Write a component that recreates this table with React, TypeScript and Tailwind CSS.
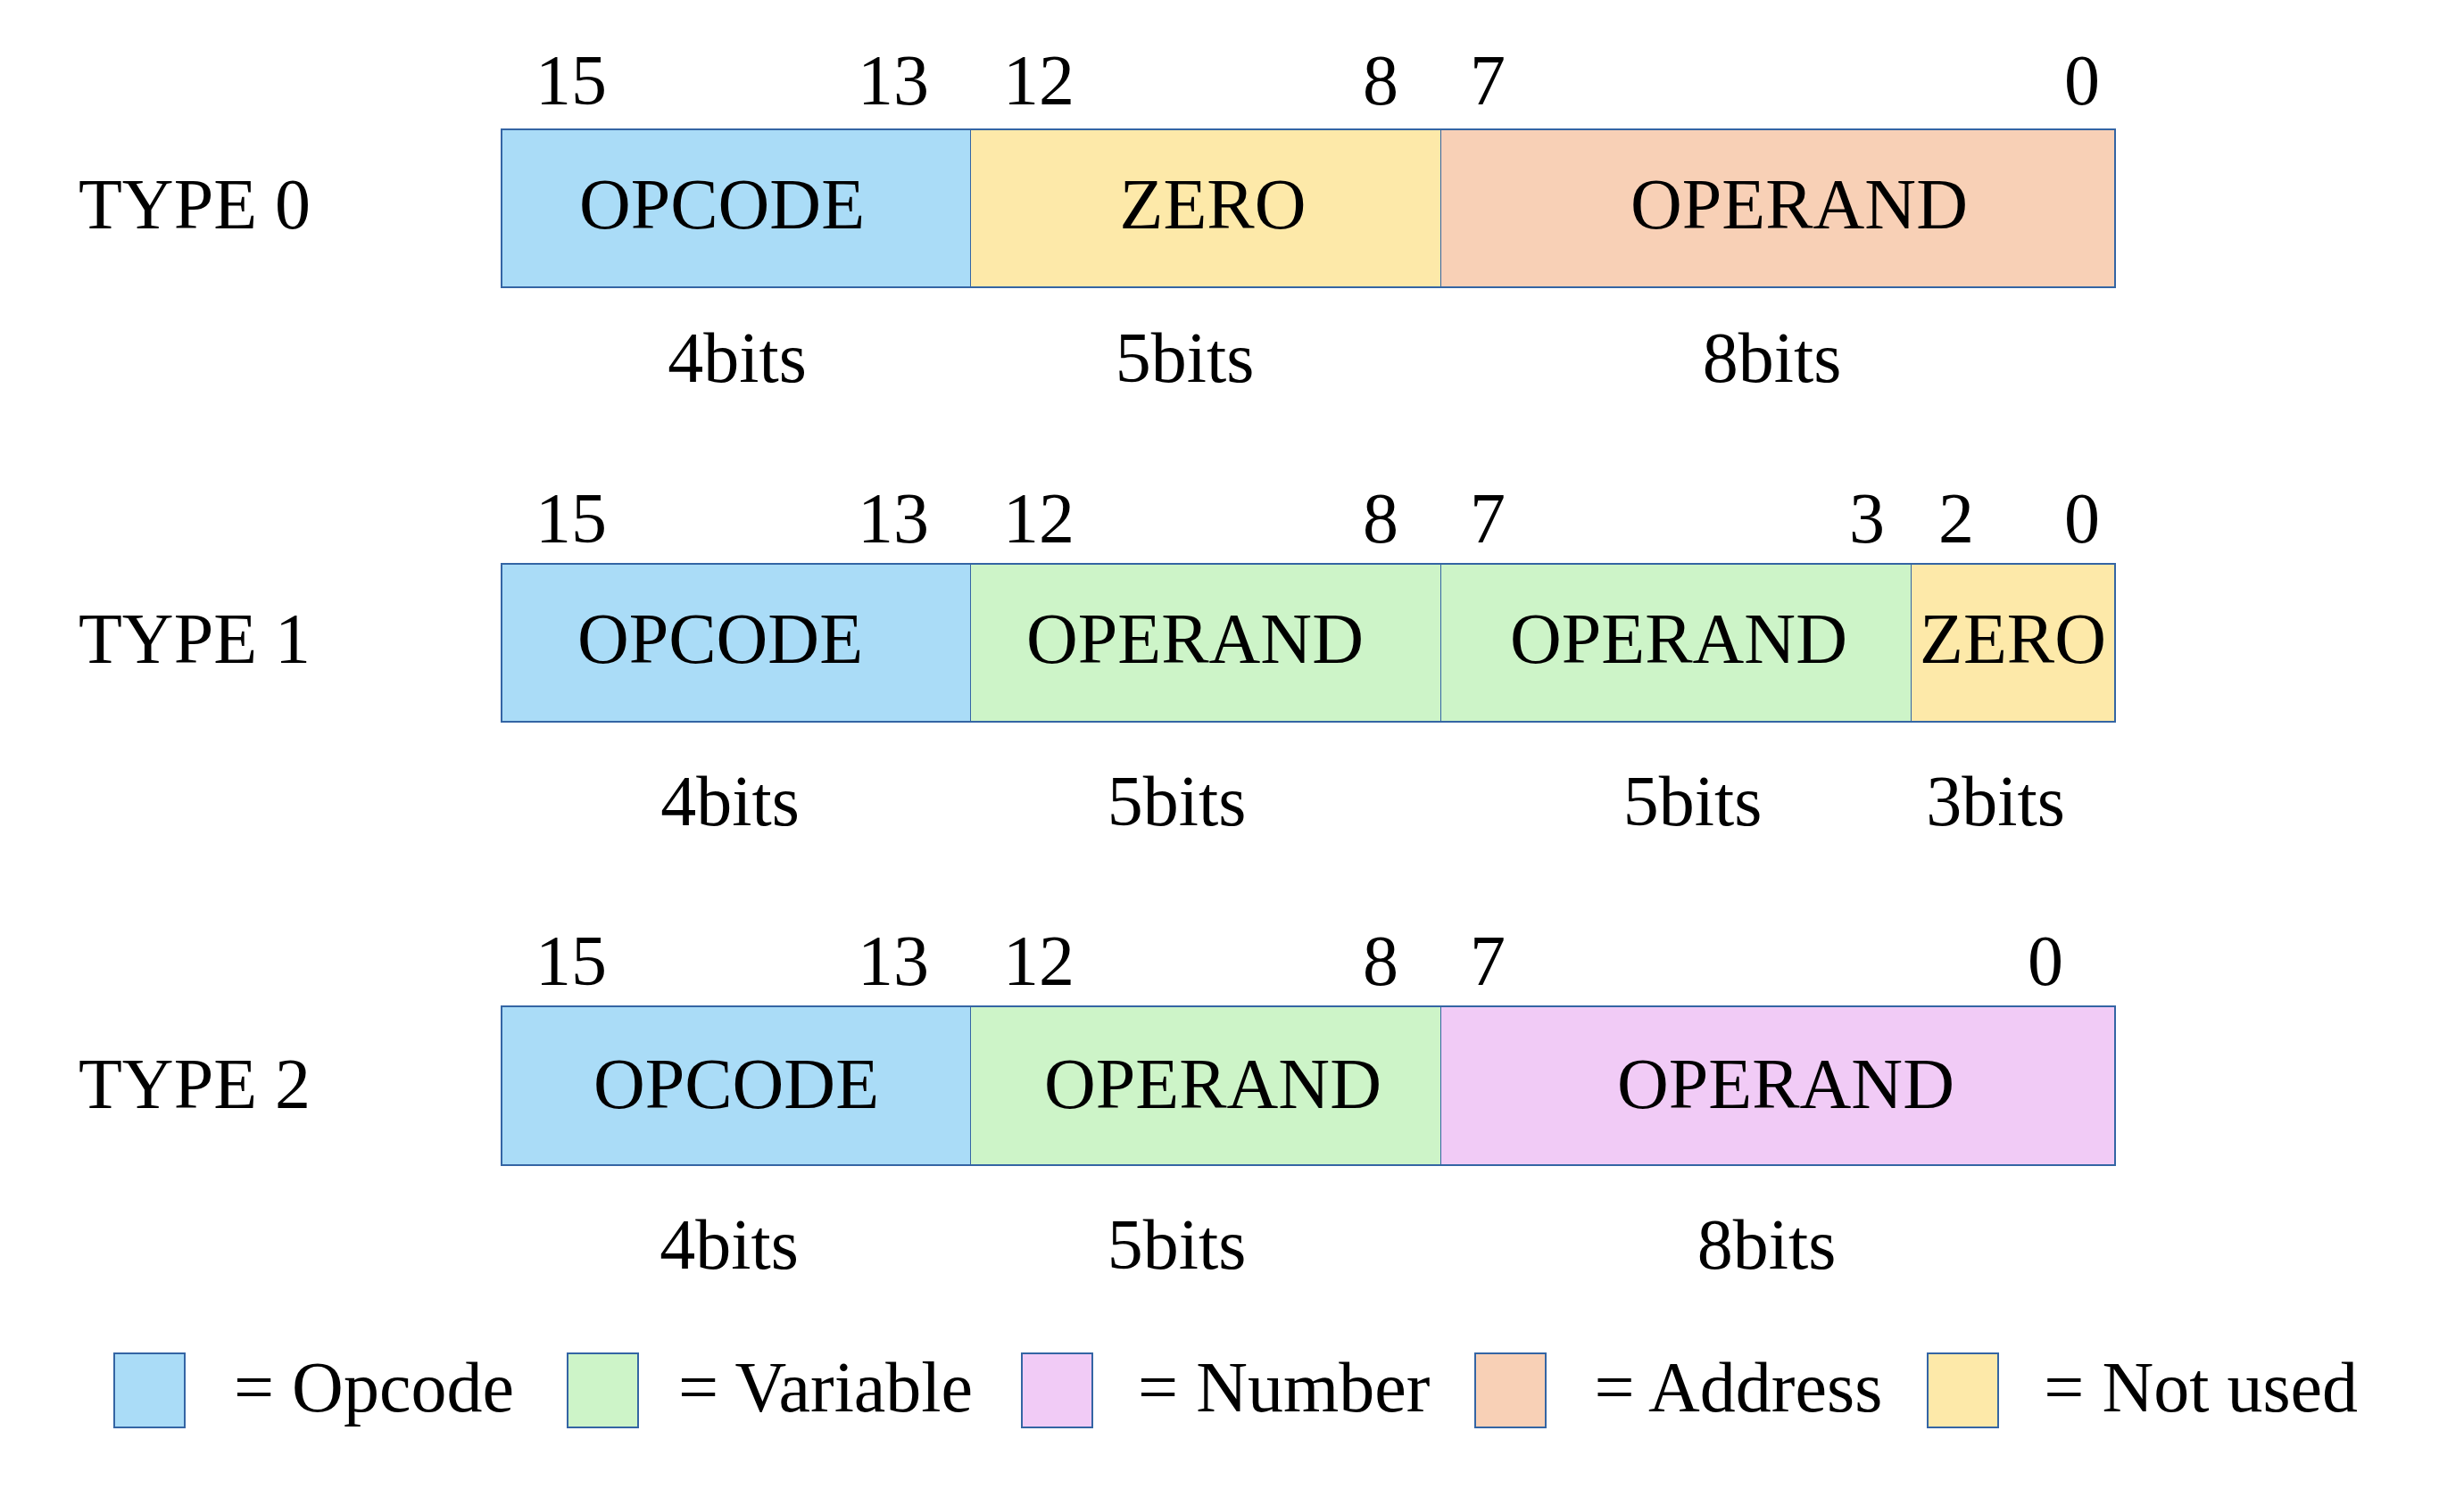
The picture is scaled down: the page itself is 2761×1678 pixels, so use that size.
import React from "react";

type NumCell = { w: string; pad: string; l: string; r: string };
type BarCell = { w: string; bg: string; shift: string; text: string };
type BitCell = { w: string; shift: string; text: string };
type Row = {
  label: string;
  mt: string;
  boxMt: string;
  boxH: string;
  boxPb: string;
  bitsMt: string;
  nums: NumCell[];
  bar: BarCell[];
  bits: BitCell[];
};

const rows: Row[] = [
  {
    label: "TYPE 0",
    mt: "mt-0",
    boxMt: "mt-[14px]",
    boxH: "h-[179px]",
    boxPb: "pb-[9px]",
    bitsMt: "mt-[38px]",
    nums: [
      { w: "w-[526px]", pad: "pl-[39px] pr-[46px]", l: "15", r: "13" },
      { w: "w-[527px]", pad: "pl-[37px] pr-[47px]", l: "12", r: "8" },
      { w: "w-[757px]", pad: "pl-[33px] pr-[18px]", l: "7", r: "0" },
    ],
    bar: [
      { w: "w-[524px]", bg: "bg-[#aadcf7]", shift: "pr-[32px]", text: "OPCODE" },
      { w: "w-[527px] border-l border-[#3465a4]", bg: "bg-[#fde9a9]", shift: "pl-[16px]", text: "ZERO" },
      { w: "flex-1 border-l border-[#3465a4]", bg: "bg-[#f8d0b6]", shift: "pl-[48px]", text: "OPERAND" },
    ],
    bits: [
      { w: "w-[526px]", shift: "pl-[4px]", text: "4bits" },
      { w: "w-[527px]", shift: "pr-[46px]", text: "5bits" },
      { w: "w-[757px]", shift: "pr-[14px]", text: "8bits" },
    ],
  },
  {
    label: "TYPE 1",
    mt: "mt-[100px]",
    boxMt: "mt-[10px]",
    boxH: "h-[179px]",
    boxPb: "pb-[9px]",
    bitsMt: "mt-[48px]",
    nums: [
      { w: "w-[526px]", pad: "pl-[39px] pr-[46px]", l: "15", r: "13" },
      { w: "w-[527px]", pad: "pl-[37px] pr-[47px]", l: "12", r: "8" },
      { w: "w-[527px]", pad: "pl-[33px] pr-[29px]", l: "7", r: "3" },
      { w: "w-[230px]", pad: "pl-[31px] pr-[18px]", l: "2", r: "0" },
    ],
    bar: [
      { w: "w-[524px]", bg: "bg-[#aadcf7]", shift: "pr-[36px]", text: "OPCODE" },
      { w: "w-[527px] border-l border-[#3465a4]", bg: "bg-[#cdf4c8]", shift: "pr-[24px]", text: "OPERAND" },
      { w: "w-[527px] border-l border-[#3465a4]", bg: "bg-[#cdf4c8]", shift: "pl-[6px]", text: "OPERAND" },
      { w: "flex-1 border-l border-[#3465a4]", bg: "bg-[#fde9a9]", shift: "pl-0", text: "ZERO" },
    ],
    bits: [
      { w: "w-[526px]", shift: "pr-[12px]", text: "4bits" },
      { w: "w-[527px]", shift: "pr-[64px]", text: "5bits" },
      { w: "w-[527px]", shift: "pl-[38px]", text: "5bits" },
      { w: "w-[230px]", shift: "pr-[40px]", text: "3bits" },
    ],
  },
  {
    label: "TYPE 2",
    mt: "mt-[99px]",
    boxMt: "mt-[10px]",
    boxH: "h-[180px]",
    boxPb: "pb-[4px]",
    bitsMt: "mt-[48px]",
    nums: [
      { w: "w-[526px]", pad: "pl-[39px] pr-[46px]", l: "15", r: "13" },
      { w: "w-[527px]", pad: "pl-[37px] pr-[47px]", l: "12", r: "8" },
      { w: "w-[757px]", pad: "pl-[33px] pr-[59px]", l: "7", r: "0" },
    ],
    bar: [
      { w: "w-[524px]", bg: "bg-[#aadcf7]", shift: "pl-0", text: "OPCODE" },
      { w: "w-[527px] border-l border-[#3465a4]", bg: "bg-[#cdf4c8]", shift: "pl-[16px]", text: "OPERAND" },
      { w: "flex-1 border-l border-[#3465a4]", bg: "bg-[#f1cbf6]", shift: "pl-[18px]", text: "OPERAND" },
    ],
    bits: [
      { w: "w-[526px]", shift: "pr-[14px]", text: "4bits" },
      { w: "w-[527px]", shift: "pr-[64px]", text: "5bits" },
      { w: "w-[757px]", shift: "pr-[26px]", text: "8bits" },
    ],
  },
];

const legend = [
  { bg: "bg-[#aadcf7]", sqMl: "ml-0", textMl: "ml-[54px]", text: "= Opcode" },
  { bg: "bg-[#cdf4c8]", sqMl: "ml-[59px]", textMl: "ml-[44px]", text: "= Variable" },
  { bg: "bg-[#f1cbf6]", sqMl: "ml-[54px]", textMl: "ml-[50px]", text: "= Number" },
  { bg: "bg-[#f8d0b6]", sqMl: "ml-[50px]", textMl: "ml-[53px]", text: "= Address" },
  { bg: "bg-[#fde9a9]", sqMl: "ml-[50px]", textMl: "ml-[50px]", text: "= Not used" },
];

function FieldRow({ row }: { row: Row }) {
  return (
    <div className={`flex flex-col ${row.mt}`}>
      <div className="flex">
        <div className="w-[561px] shrink-0" />
        {row.nums.map((n, i) => (
          <div key={i} className={`flex justify-between shrink-0 ${n.w} ${n.pad}`}>
            <span>{n.l}</span>
            <span>{n.r}</span>
          </div>
        ))}
      </div>
      <div className={`flex ${row.boxMt} ${row.boxH}`}>
        <div className={`w-[561px] shrink-0 flex items-center pl-[88px] ${row.boxPb}`}>
          <span className="whitespace-pre">{row.label}</span>
        </div>
        <div className="w-[1810px] h-full flex border-2 border-[#3465a4]">
          {row.bar.map((c, i) => (
            <div
              key={i}
              className={`flex items-center justify-center shrink-0 ${c.w} ${c.bg} ${c.shift} ${row.boxPb}`}
            >
              <span>{c.text}</span>
            </div>
          ))}
        </div>
      </div>
      <div className={`flex ${row.bitsMt}`}>
        <div className="w-[561px] shrink-0" />
        {row.bits.map((b, i) => (
          <div key={i} className={`flex justify-center shrink-0 ${b.w} ${b.shift}`}>
            <span>{b.text}</span>
          </div>
        ))}
      </div>
    </div>
  );
}

export default function App() {
  return (
    <div className="w-[2761px] h-[1678px] bg-white overflow-hidden text-black font-['Liberation_Serif','Times_New_Roman',serif] text-[80px] leading-[80px] pt-[50px]">
      {rows.map((r, i) => (
        <FieldRow key={i} row={r} />
      ))}
      <div className="flex items-center pl-[127px] mt-[80px]">
        {legend.map((l, i) => (
          <div key={i} className={`flex items-center ${l.sqMl}`}>
            <div className={`w-[81px] h-[85px] border-2 border-[#3465a4] shrink-0 ${l.bg}`} />
            <span className={`whitespace-pre pb-[6px] ${l.textMl}`}>{l.text}</span>
          </div>
        ))}
      </div>
    </div>
  );
}
